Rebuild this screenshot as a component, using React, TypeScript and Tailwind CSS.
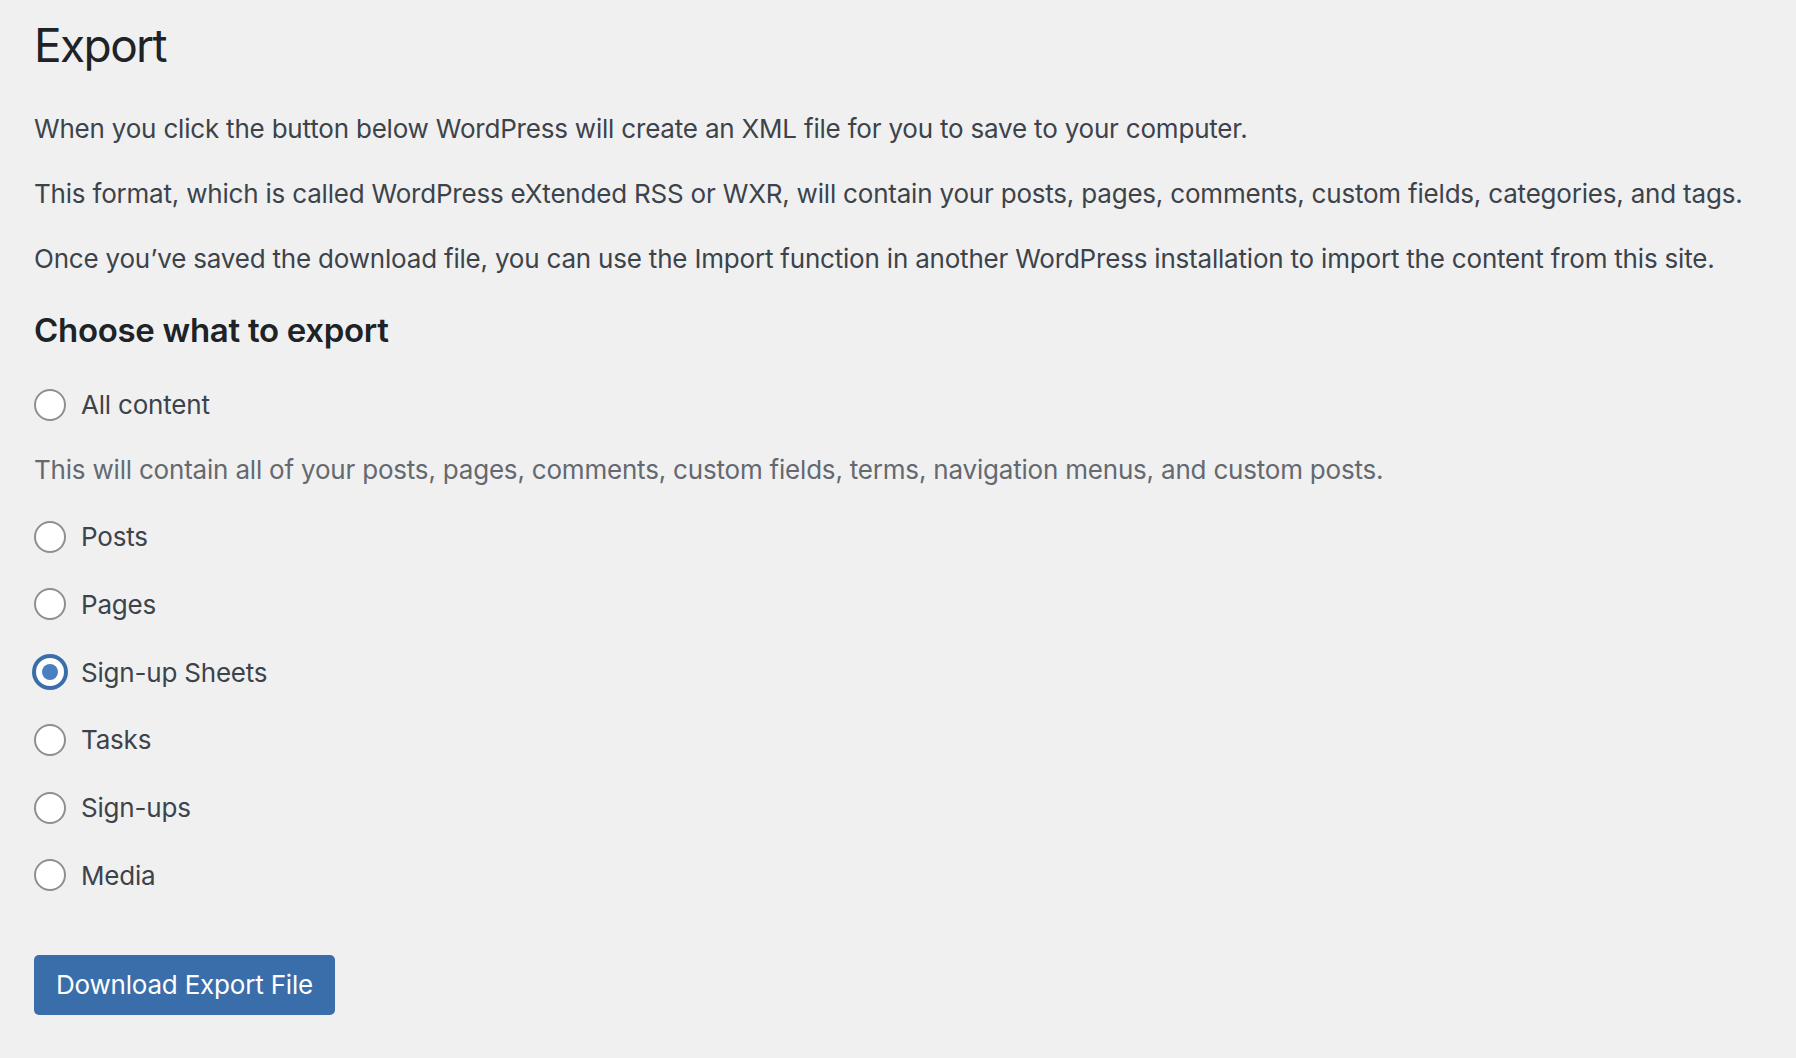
import React from "react";

const options = [
  { label: "Posts", checked: false },
  { label: "Pages", checked: false },
  { label: "Sign-up Sheets", checked: true },
  { label: "Tasks", checked: false },
  { label: "Sign-ups", checked: false },
  { label: "Media", checked: false },
];

function Radio({ checked }: { checked?: boolean }) {
  if (checked) {
    return (
      <span className="w-[32px] h-[32px] shrink-0 rounded-full bg-white border-2 border-[#3a6ea9] shadow-[0_0_0_2px_#3a6ea9] flex items-center justify-center">
        <span className="w-[16px] h-[16px] rounded-full bg-[#4a7fc0]" />
      </span>
    );
  }
  return <span className="w-[32px] h-[32px] shrink-0 rounded-full bg-white border-2 border-[#8c8f94]" />;
}

function Option({ label, checked }: { label: string; checked?: boolean }) {
  return (
    <label className="flex items-center gap-[15px] h-[39px] pt-[2px] leading-[39px] text-[#3c434a]">
      <Radio checked={checked} />
      <span>{label}</span>
    </label>
  );
}

export default function App() {
  return (
    <div
      className="min-h-screen w-full bg-[#f0f0f1] pl-[34px] pt-[15px] text-[26px] tracking-[-0.2px]"
      style={{ fontFamily: "Inter, 'Noto Sans', sans-serif" }}
    >
      {/* Title */}
      <h1 className="text-[46px] leading-[60px] font-normal tracking-[-1.6px] text-[#1d2327]">Export</h1>

      {/* Intro */}
      <div className="mt-[34px] text-[#3c434a] leading-[39px] space-y-[26px]">
        <p>When you click the button below WordPress will create an XML file for you to save to your computer.</p>
        <p>This format, which is called WordPress eXtended RSS or WXR, will contain your posts, pages, comments, custom fields, categories, and tags.</p>
        <p>Once you’ve saved the download file, you can use the Import function in another WordPress installation to import the content from this site.</p>
      </div>

      {/* Choices */}
      <h2 className="mt-[31px] text-[33px] leading-[43px] font-semibold tracking-[-0.3px] text-[#1d2327]">Choose what to export</h2>

      <div className="mt-[32px]">
        <Option label="All content" />
        <p className="mt-[27px] leading-[39px] text-[#646970]">
          This will contain all of your posts, pages, comments, custom fields, terms, navigation menus, and custom posts.
        </p>
        <div className="mt-[27px] flex flex-col gap-[28.8px]">
          {options.map((o) => (
            <Option key={o.label} label={o.label} checked={o.checked} />
          ))}
        </div>
      </div>

      <button className="mt-[61px] h-[60px] px-[22px] rounded-[5px] bg-[#3a6eaa] text-white text-[26px] leading-[60px] tracking-[-0.2px]">
        Download Export File
      </button>
    </div>
  );
}
